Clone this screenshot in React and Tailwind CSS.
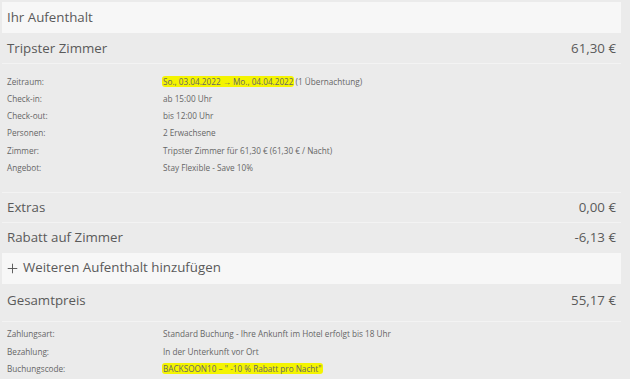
import { Plus } from 'lucide-react';

// Booking summary panel ("Ihr Aufenthalt")

const StayDetails = [
  { label: 'Zeitraum:', value: 'date' },
  { label: 'Check-in:', value: 'ab 15:00 Uhr' },
  { label: 'Check-out:', value: 'bis 12:00 Uhr' },
  { label: 'Personen:', value: '2 Erwachsene' },
  { label: 'Zimmer:', value: 'Tripster Zimmer für 61,30 € (61,30 € / Nacht)' },
  { label: 'Angebot:', value: 'Stay Flexible - Save 10%' },
];

const Highlight = ({ children }) => (
  <span className="bg-[#f4f400] rounded-[3px] px-[1px] -mx-[1px]">{children}</span>
);

const SummaryRow = ({ title, price, light = false, border = true, className = 'h-[31px] items-center' }) => (
  <div
    className={`flex justify-between px-[5px] text-[13.3px] text-[#5a5a5a] ${className}
                ${light ? 'bg-[#f7f7f7]' : ''} ${border ? 'border-b border-[#f3f3f3]' : ''}`}
  >
    <span>{title}</span>
    {price && <span>{price}</span>}
  </div>
);

const DetailRow = ({ label, children }) => (
  <div className="flex items-center h-[17.3px] text-[8.2px] text-[#666]">
    <span className="w-[156px] shrink-0">{label}</span>
    <span>{children}</span>
  </div>
);

export default function App() {
  return (
    <div
      className="w-[630px] h-[379px] bg-[#ebebeb] pt-[2px] pl-[2px] overflow-hidden"
      style={{ fontFamily: '"Open Sans", "Noto Sans", sans-serif' }}
    >
      <div className="w-[619px]">
        <SummaryRow title="Ihr Aufenthalt" light border={false} />
        <SummaryRow title="Tripster Zimmer" price="61,30 €" className="h-[31px] items-center pt-[2px]" />

        {/* Stay details */}
        <div className="pt-[9px] pb-[15px] px-[5px] border-b border-[#f3f3f3]">
          {StayDetails.map((row) => (
            <DetailRow key={row.label} label={row.label}>
              {row.value === 'date' ? (
                <>
                  <Highlight>So., 03.04.2022 → Mo., 04.04.2022</Highlight> (1 Übernachtung)
                </>
              ) : (
                row.value
              )}
            </DetailRow>
          ))}
        </div>

        <SummaryRow title="Extras" price="0,00 €" className="h-[30px] items-center pt-[1px]" />
        <SummaryRow title="Rabatt auf Zimmer" price="-6,13 €" border={false} className="h-[30px] items-center" />

        <div className="flex items-center gap-[3px] h-[31px] px-[3px] bg-[#f7f7f7] text-[13.3px] text-[#5a5a5a]">
          <Plus size={15} strokeWidth={1.5} className="text-[#555]" />
          <span>Weiteren Aufenthalt hinzufügen</span>
        </div>

        <SummaryRow title="Gesamtpreis" price="55,17 €" className="h-[38px] items-start pt-[7px]" />

        {/* Payment details */}
        <div className="pt-[4px] px-[5px]">
          <DetailRow label="Zahlungsart:">
            Standard Buchung - Ihre Ankunft im Hotel erfolgt bis 18 Uhr
          </DetailRow>
          <DetailRow label="Bezahlung:">In der Unterkunft vor Ort</DetailRow>
          <DetailRow label="Buchungscode:">
            <Highlight>BACKSOON10 – " -10 % Rabatt pro Nacht"</Highlight>
          </DetailRow>
        </div>
      </div>
    </div>
  );
}
